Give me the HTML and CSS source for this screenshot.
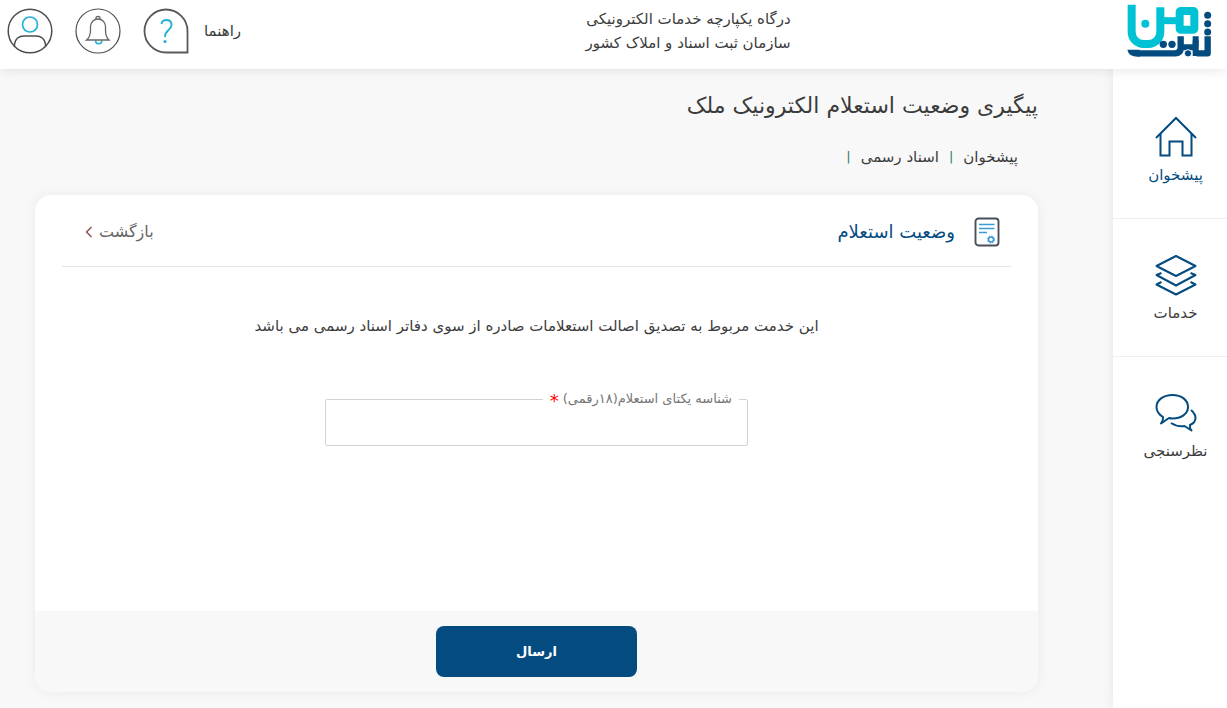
FILE: index.html
```html
<!DOCTYPE html>
<html lang="fa" dir="rtl">
<head>
<meta charset="utf-8">
<meta name="viewport" content="width=device-width, initial-scale=1">
<title>پیگیری وضعیت استعلام الکترونیک ملک</title>
<link rel="stylesheet" href="styles.css">
</head>
<body>
<header class="topbar">
  <a class="logo" href="#" aria-label="ثبت من">
    <svg viewBox="52 10 255 162" width="85" height="54" fill="none">
      <g stroke="#00c2d4" stroke-width="24" stroke-linejoin="round">
        <path d="M66 12V94a36 36 0 0 0 36 36h14a36 36 0 0 0 36-36V20"/>
        <path d="M152 60H206" stroke-width="21"/>
        <rect x="210" y="31" width="44" height="56" rx="3"/>
      </g>
      <circle cx="107" cy="69" r="12" fill="#00c2d4"/>
      <g stroke="#044b7f" stroke-width="19" stroke-linejoin="round">
        <path d="M294 107V158H261"/>
        <path d="M258 107V132q0 8-9 8H213" stroke-width="18"/>
        <path d="M258 120V166" stroke-width="18"/>
        <path d="M213 107V142q0 16-17 16H85"/>
      </g>
      <g fill="#044b7f">
        <circle cx="294" cy="44" r="10.500"/>
        <circle cx="294" cy="69" r="10.500"/>
        <circle cx="294" cy="94" r="10.500"/>
        <circle cx="161" cy="131" r="11"/>
        <circle cx="187" cy="131" r="11"/>
        <circle cx="235" cy="158" r="11" stroke="#fff" stroke-width="3"/>
        <path d="M53 147H90V168H84Q57 168 53 147Z"/>
      </g>
    </svg>
  </a>
  <p class="portal-name">درگاه یکپارچه خدمات الکترونیکی<br>سازمان ثبت اسناد و املاک کشور</p>
  <div class="tools">
    <a class="help" href="#">
      <span>راهنما</span>
      <svg viewBox="0 0 46 46" width="46" height="46" fill="none">
        <path d="M23 1.500A21.500 21.500 0 0 0 23 44.500H44.500V23A21.500 21.500 0 0 0 23 1.500Z" stroke="#58595b" stroke-width="1.800"/>
        <path d="M18.500 16Q19 12 23.500 12Q28.500 12 28.500 17Q28.500 19.500 25.500 22Q22 25 22 29" stroke="#22b2d3" stroke-width="1.900"/>
        <circle cx="22" cy="33.500" r="1.600" fill="#22b2d3"/>
      </svg>
    </a>
    <button class="icon-button" type="button" aria-label="اعلان‌ها">
      <svg viewBox="0 0 46 46" width="46" height="46" fill="none">
        <circle cx="23" cy="23" r="22" stroke="#4d4d4f" stroke-width="1.200"/>
        <path d="M20.500 32.500a3.200 3.200 0 0 0 6.400 0" stroke="#22b2d3" stroke-width="1.500"/>
        <path d="M11.500 32Q15.500 29 15.500 22V18.500a7.500 7.500 0 0 1 15 0V22Q30.500 29 34 32ZM21 11.500V9.500q0-1 2-1t2 1v2" stroke="#66676a" stroke-width="1.300"/>
      </svg>
    </button>
    <button class="icon-button" type="button" aria-label="حساب کاربری">
      <svg viewBox="0 0 46 46" width="46" height="46" fill="none">
        <circle cx="23" cy="23" r="21.800" stroke="#4d4d4f" stroke-width="1.500"/>
        <circle cx="23" cy="16.500" r="7.500" stroke="#22b2d3" stroke-width="1.700"/>
        <path d="M7.500 38.500V36Q9 28 17 28H29Q37 28 38.500 36V38.500" stroke="#4d4d4f" stroke-width="1.500"/>
      </svg>
    </button>
  </div>
</header>
<div class="layout">
  <nav class="sidebar">
    <a class="side-link active" href="#">
      <svg viewBox="0 0 42 42" width="42" height="42" fill="none" stroke="#044b7f" stroke-width="2">
        <path d="M1 22L21 2L41 22M5.500 18V39.500H14.500V25.500H27.500V39.500H36.500V18"/>
      </svg>
      <span>پیشخوان</span>
    </a>
    <a class="side-link" href="#">
      <svg viewBox="0 0 42 42" width="42" height="42" fill="none" stroke="#044b7f" stroke-width="2" stroke-linejoin="round">
        <path d="M21 2L40.500 12L21 22L1.500 12Z"/>
        <path d="M6.500 19L1.500 21L21 31.500L40.500 21L35.500 19M6.500 28L1.500 30.500L21 40.500L40.500 30.500L35.500 28"/>
      </svg>
      <span>خدمات</span>
    </a>
    <a class="side-link" href="#">
      <svg viewBox="0 0 42 42" width="42" height="42" fill="none" stroke="#044b7f" stroke-width="2" stroke-linejoin="round">
        <path d="M8 25C4 22.500 1.500 19 1.500 15C1.500 8 8.500 3 17.500 3S33 8 33 15S26 26.500 17.500 26.500Q15.500 26.500 14 26L6 31.500Q8.500 28 8 25Z"/>
        <path d="M36 18Q40.500 22 40.500 26Q40.500 30.500 35 33Q34.500 36 36.500 38.500L29.500 34Q22 35 16 31"/>
      </svg>
      <span>نظرسنجی</span>
    </a>
  </nav>
  <main class="content">
    <h1 class="page-title">پیگیری وضعیت استعلام الکترونیک ملک</h1>
    <nav class="breadcrumb">
      <a href="#">پیشخوان</a>
      <span class="divider">|</span>
      <a href="#">اسناد رسمی</a>
      <span class="divider">|</span>
    </nav>
    <form class="card">
      <div class="card-head">
        <h2 class="card-title">
          <svg viewBox="0 0 26 30" width="26" height="30" fill="none">
            <rect x="1.500" y="1.500" width="23" height="27" rx="3" stroke="#4b4f5c" stroke-width="1.900"/>
            <path d="M5 7.500H20.500M5 11.500H20.500M5 15.500H13" stroke="#3b9ad6" stroke-width="1.500"/>
            <circle cx="17" cy="22.500" r="2.500" stroke="#3598db" stroke-width="1.500"/>
            <circle cx="17" cy="22.500" r="3.600" stroke="#3598db" stroke-width="1" stroke-dasharray="1.400 1.427"/>
          </svg>
          <span>وضعیت استعلام</span>
        </h2>
        <a class="back" href="#">
          <span>بازگشت</span>
          <svg viewBox="0 0 8 12" width="8" height="12" fill="none" stroke="#8b4545" stroke-width="1.300"><path d="M6.500 1L1.500 6L6.500 11"/></svg>
        </a>
      </div>
      <div class="card-body">
        <p class="note">این خدمت مربوط به تصدیق اصالت استعلامات صادره از سوی دفاتر اسناد رسمی می باشد</p>
        <div class="field">
          <label class="field-label" for="inquiry-id">شناسه یکتای استعلام(۱۸رقمی) <span class="required">*</span></label>
          <input class="field-input" id="inquiry-id" type="text" required>
        </div>
      </div>
      <div class="card-foot">
        <button class="submit" type="submit">ارسال</button>
      </div>
    </form>
  </main>
</div>
</body>
</html>
```
FILE: styles.css
```css
* { box-sizing: border-box; }
body {
  margin: 0;
  min-height: 100vh;
  display: flex;
  flex-direction: column;
  background: #f8f8f8;
  color: #3c3c3c;
  font-family: "DejaVu Sans", sans-serif;
  font-size: 15px;
  line-height: 24px;
}
a { color: inherit; text-decoration: none; }
h1, h2, p { margin: 0; }
svg { display: block; flex: none; }
button { font-family: inherit; cursor: pointer; }
.topbar {
  display: flex;
  align-items: center;
  justify-content: space-between;
  padding: 4px 15px 4px 7px;
  min-height: 69px;
  background: #fff;
  box-shadow: 0 0 12px rgba(0, 0, 0, 0.12);
  position: relative;
}
.logo { align-self: flex-start; }
.portal-name { padding-bottom: 7px; }
.tools {
  display: flex;
  align-items: center;
  gap: 22px;
  padding-bottom: 8px;
}
.help {
  display: flex;
  align-items: center;
  gap: 15px;
  padding-inline-start: 8px;
}
.icon-button { padding: 0; border: 0; background: none; }
.layout { flex: 1; display: flex; }
.sidebar {
  flex: none;
  width: 114px;
  background: #fff;
  box-shadow: 0 0 12px rgba(0, 0, 0, 0.08);
}
.side-link {
  display: flex;
  flex-direction: column;
  align-items: center;
  gap: 5px;
  padding: 35px 0 31px 11px;
  border-bottom: 1px solid #eee;
}
.side-link:first-child { padding-top: 47px; }
.side-link:last-child { border-bottom: 0; }
.side-link.active { color: #044b7f; }
.content {
  flex: 1;
  display: flex;
  flex-direction: column;
  padding: 21px 75px 16px 35px;
}
.page-title {
  font-size: 22px;
  line-height: 32px;
  font-weight: 400;
}
.breadcrumb {
  display: flex;
  gap: 10px;
  padding: 23px 20px 26px;
}
.divider { color: #2f7a5c; font-size: 13px; }
.card {
  flex: 1;
  display: flex;
  flex-direction: column;
  background: #fff;
  border-radius: 16px;
  box-shadow: 0 0 14px rgba(0, 0, 0, 0.06);
  overflow: hidden;
}
.card-head {
  display: flex;
  align-items: center;
  justify-content: space-between;
  margin: 0 27px;
  padding: 22px 11px 19px 23px;
  border-bottom: 1px solid #e4e4e4;
}
.card-title {
  display: flex;
  align-items: center;
  gap: 19px;
  color: #044b7f;
  font-size: 18px;
  font-weight: 400;
}
.back {
  display: flex;
  align-items: center;
  gap: 6px;
  color: #666;
  font-size: 16px;
}
.card-body {
  flex: 1;
  display: flex;
  flex-direction: column;
  align-items: center;
  gap: 61px;
  padding: 47px 24px;
}
.note { text-align: center; }
.field { position: relative; width: 423px; max-width: 100%; }
.field-label {
  position: absolute;
  top: -12px;
  right: 9px;
  padding: 0 7px;
  background: #fff;
  color: #757575;
  font-size: 13px;
}
.required { color: #f00; font-size: 18px; vertical-align: -4px; line-height: 16px; }
.field-input {
  display: block;
  width: 100%;
  height: 47px;
  padding: 0 12px;
  border: 1px solid #d3d3d3;
  border-radius: 2px;
  background: #fff;
  font: inherit;
}
.card-foot {
  display: flex;
  justify-content: center;
  padding: 15px;
  background: #f8f8f8;
}
.submit {
  width: 201px;
  height: 51px;
  border: 0;
  border-radius: 8px;
  background: #044b7f;
  color: #fff;
  font-size: 13px;
  font-weight: 700;
}
```
